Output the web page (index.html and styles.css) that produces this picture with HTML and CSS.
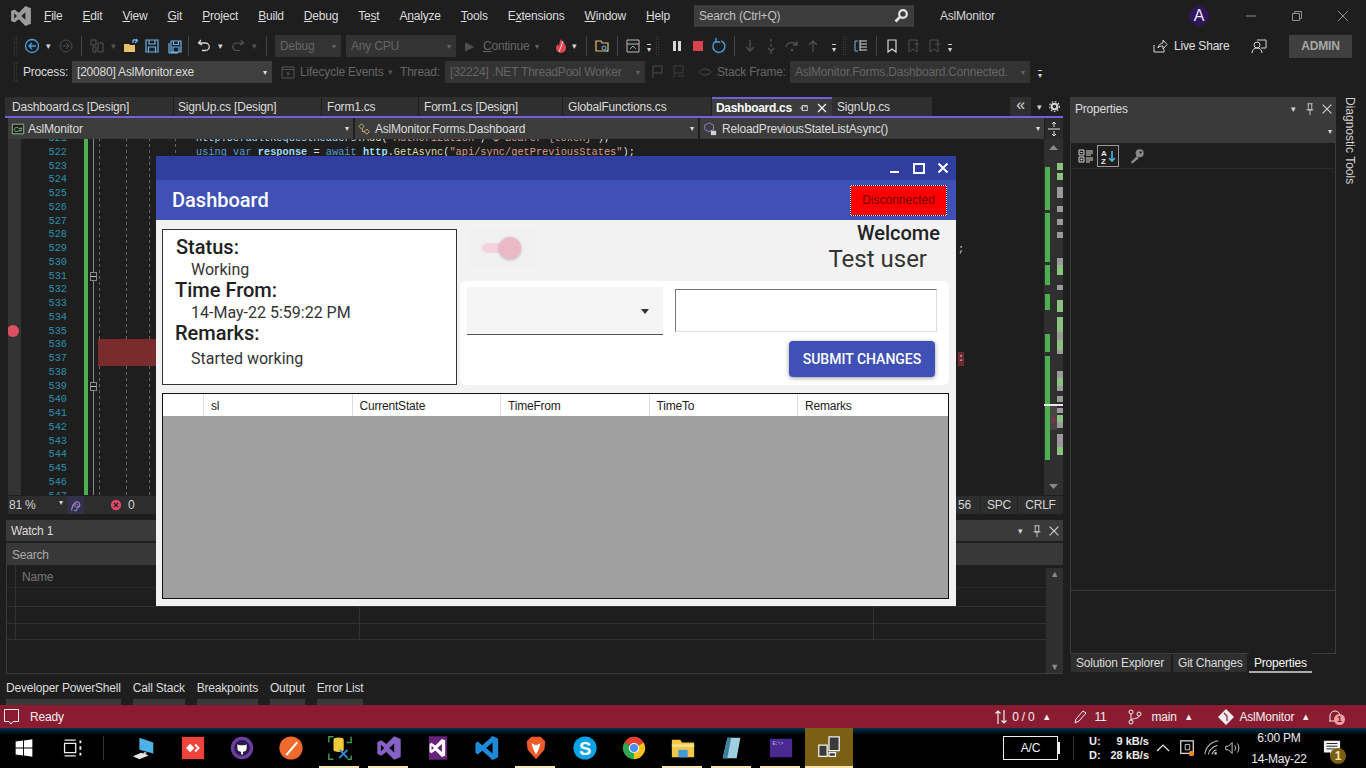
FILE: index.html
```html
<!DOCTYPE html>
<html>

<head>
  <title>AslMonitor - Visual Studio</title>
  <link rel="stylesheet" href="styles.css">
</head>

<body>
  <div class="ide">

    <header class="titlebar">
      <svg class="vs-logo" viewBox="0 0 20 20"><path fill="#9b9b9b" fill-rule="evenodd" d="M14 1 8 7 4 4 1 5.500v9L4 16l4-3 6 6 5-2V3zM3.800 7.500 6.300 10l-2.500 2.500zM14 6.500v7L10.300 10z"/></svg>
      <nav class="menu">
        <span><u>F</u>ile</span><span><u>E</u>dit</span><span><u>V</u>iew</span><span><u>G</u>it</span><span><u>P</u>roject</span><span><u>B</u>uild</span><span><u>D</u>ebug</span><span>Te<u>s</u>t</span><span>A<u>n</u>alyze</span><span><u>T</u>ools</span><span>E<u>x</u>tensions</span><span><u>W</u>indow</span><span><u>H</u>elp</span>
      </nav>
      <div class="search">
        <span>Search (Ctrl+Q)</span>
        <svg class="ic" viewBox="0 0 16 16"><circle cx="10" cy="6" r="3.800" fill="none" stroke="#e4e4e4" stroke-width="2.200"/><path d="M7 9l-4.500 4.500" stroke="#e4e4e4" stroke-width="2.600"/></svg>
      </div>
      <span class="app-title">AslMonitor</span>
      <span class="avatar">A</span>
      <div class="win-buttons">
        <svg class="ic" viewBox="0 0 16 16"><path d="M3 8h10" stroke="#8f8f8f"/></svg>
        <svg class="ic" viewBox="0 0 16 16"><path d="M3.500 5.500h7v7h-7zM5.500 5.500v-2h7v7h-2" fill="none" stroke="#8f8f8f"/></svg>
        <svg class="ic" viewBox="0 0 16 16"><path d="M3 3l10 10M13 3 3 13" stroke="#8f8f8f"/></svg>
      </div>
    </header>

    <div class="toolbar toolbar-main">
      <span class="grip"></span>
      <span class="ti"><svg class="ic" viewBox="0 0 16 16"><circle cx="8" cy="8" r="6.500" fill="none" stroke="#4a9fe0" stroke-width="1.300"/><path d="M12 8H5M8 5 5 8l3 3" fill="none" stroke="#4a9fe0" stroke-width="1.300"/></svg></span>
      <span class="tc">▾</span>
      <span class="ti"><svg class="ic" viewBox="0 0 16 16"><circle cx="8" cy="8" r="6" fill="none" stroke="#4c4c4c"/><path d="M4.500 8h7M8 5l3 3-3 3" fill="none" stroke="#4c4c4c"/></svg></span>
      <span class="ts"></span>
      <span class="ti"><svg class="ic" viewBox="0 0 16 16"><path d="M2 2h5v5H2zM9 5h5v9H9zM4 9h3v5H4z" fill="none" stroke="#565656"/></svg></span>
      <span class="tc dim">▾</span>
      <span class="ti"><svg class="ic" viewBox="0 0 16 16"><path d="M1 14V6h5l1 1h5v7z" fill="#e8c26b"/><path d="M10 5V2M10 2l4 0M13 1l1.500 1.500L12 5" fill="none" stroke="#6cb4e8" stroke-width="1.300"/></svg></span>
      <span class="ti"><svg class="ic" viewBox="0 0 16 16"><path d="M2 2h12v12H2zM5 2v4h6V2M4.500 14V9h7v5" fill="none" stroke="#6cb4e8" stroke-width="1.200"/></svg></span>
      <span class="ti save-all"><svg class="ic" viewBox="0 0 16 16"><path d="M4 3h10v11H4zM6.500 3v3.500h5V3M6 14V9h6v5M2 5v10h9" fill="none" stroke="#6cb4e8" stroke-width="1.200"/></svg></span>
      <span class="ts"></span>
      <span class="ti"><svg class="ic" viewBox="0 0 16 16"><path d="M5 2 2.500 5 6 7M3 5h6.500a3.500 3.500 0 0 1 0 7.500H6" fill="none" stroke="#d4d4d4" stroke-width="1.300"/></svg></span>
      <span class="tc">▾</span>
      <span class="ti"><svg class="ic" viewBox="0 0 16 16"><path d="M11 2l2.500 3L10 7M13 5H6.500a3.500 3.500 0 0 0 0 7.500H10" fill="none" stroke="#555" stroke-width="1.200"/></svg></span>
      <span class="tc dim">▾</span>
      <span class="ts"></span>
      <span class="combo combo-debug">Debug<i>▾</i></span>
      <span class="combo combo-cpu">Any CPU<i>▾</i></span>
      <span class="continue"><b>▶</b><span><u>C</u>ontinue</span><i>▾</i></span>
      <span class="ti"><svg class="ic" viewBox="0 0 16 16"><path d="M8 1c1 3 5 4 5 9a5 5 0 0 1-10 0c0-2 1-3 2-4 0 1 .5 2 1 2 .5-2 .5-5 2-7z" fill="#e0474c"/><path d="M10 3 6 14" stroke="#d8d8d8"/></svg></span>
      <span class="tc pull">▾</span>
      <span class="ts"></span>
      <span class="ti"><svg class="ic" viewBox="0 0 16 16"><path d="M2 3h5l1 2h6v8H2z" fill="none" stroke="#e0c070" stroke-width="1.200"/><circle cx="10" cy="10" r="2" fill="none" stroke="#6cb4e8"/><path d="M11.500 11.500 14 14" stroke="#6cb4e8"/></svg></span>
      <span class="ts"></span>
      <span class="ti"><svg class="ic" viewBox="0 0 16 16"><path d="M2 2h12v12H2zM2 6h12" fill="none" stroke="#b8b8b8"/><path d="M5 11l3-3 3 3" fill="none" stroke="#6cb4e8"/></svg></span>
      <span class="more">▾</span>
      <span class="grip"></span>
      <span class="ti pause"><svg class="ic" viewBox="0 0 16 16"><path d="M4 3h3v10H4zM9 3h3v10H9z" fill="#d8d8d8"/></svg></span>
      <span class="ti"><svg class="ic" viewBox="0 0 16 16"><path d="M3 3h10v10H3z" fill="#d9434e"/></svg></span>
      <span class="ti"><svg class="ic" viewBox="0 0 16 16"><path d="M10 2.800A6 6 0 1 1 5 3.200M5 0v4h4" fill="none" stroke="#4a9fe0" stroke-width="1.400"/></svg></span>
      <span class="ts"></span>
      <span class="ti"><svg class="ic" viewBox="0 0 16 16"><path d="M8 2v11M4 9l4 4 4-4" fill="none" stroke="#505050" stroke-width="1.300"/></svg></span>
      <span class="ti"><svg class="ic" viewBox="0 0 16 16"><path d="M8 1v3M8 6v3M5 10l3 3 3-3" fill="none" stroke="#505050" stroke-width="1.300"/><circle cx="8" cy="15" r="1" fill="#505050"/></svg></span>
      <span class="ti"><svg class="ic" viewBox="0 0 16 16"><path d="M2 9c1-5 8-6 11-2M13 3v4H9" fill="none" stroke="#505050" stroke-width="1.300"/><circle cx="8" cy="12" r="1.300" fill="#505050"/></svg></span>
      <span class="ti"><svg class="ic" viewBox="0 0 16 16"><path d="M8 14V3M4 7l4-4 4 4" fill="none" stroke="#505050" stroke-width="1.300"/></svg></span>
      <span class="more step-more">▾</span>
      <span class="grip"></span>
      <span class="ti"><svg class="ic" viewBox="0 0 16 16"><path d="M5 3H2v10h3" fill="none" stroke="#6cb4e8"/><path d="M7 3h7M7 6h7M7 9h7M7 12h7M7 2v11" stroke="#d8d8d8"/></svg></span>
      <span class="ts"></span>
      <span class="ti"><svg class="ic" viewBox="0 0 16 16"><path d="M4 2h8v12l-4-3-4 3z" fill="none" stroke="#d8d8d8" stroke-width="1.200"/></svg></span>
      <span class="ti"><svg class="ic" viewBox="0 0 16 16"><path d="M4 2h8v12l-4-3-4 3zM9 6h5" fill="none" stroke="#505050"/></svg></span>
      <span class="ti"><svg class="ic" viewBox="0 0 16 16"><path d="M4 2h8v12l-4-3-4 3zM9 6h5" fill="none" stroke="#505050"/></svg></span>
      <span class="more">▾</span>

      <div class="toolbar-right">
        <svg class="ic" viewBox="0 0 16 16"><path d="M2 7v7h10v-3M6 10c0-3 3-5 5-5V2l4 4.500L11 11V8c-2 0-4 0-5 2z" fill="none" stroke="#d4d4d4"/></svg>
        <span class="live-share">Live Share</span>
        <svg class="ic feedback" viewBox="0 0 16 16"><path d="M6 2h9v8h-5" fill="none" stroke="#d4d4d4"/><circle cx="6" cy="7" r="3" fill="none" stroke="#d4d4d4"/><path d="M1 15c0-3 2-5 5-5s5 2 5 5" fill="none" stroke="#d4d4d4"/></svg>
        <span class="admin">ADMIN</span>
      </div>
    </div>

    <div class="toolbar toolbar-debug">
      <span class="grip"></span>
      <span class="tb-label">Process:</span>
      <span class="combo combo-process">[20080] AslMonitor.exe<i>▾</i></span>
      <span class="ti lifecycle-ic"><svg class="ic" viewBox="0 0 16 16"><path d="M2 3h12v11H2zM2 5.500h12" fill="none" stroke="#555"/><path d="M9 7 6 10h2l-1 3 3-4H8z" fill="#555"/></svg></span>
      <span class="tb-dim lifecycle">Lifecycle Events</span>
      <span class="tc dim">▾</span>
      <span class="tb-dim thread">Thread:</span>
      <span class="combo combo-thread">[32224] .NET ThreadPool Worker<i>▾</i></span>
      <span class="ti flag"><svg class="ic" viewBox="0 0 16 16"><path d="M3 14V2h9v7H3" fill="none" stroke="#4c4c4c"/></svg></span>
      <span class="ti"><svg class="ic" viewBox="0 0 16 16"><path d="M3 14V2h9v7H3M7 12h7" fill="none" stroke="#3f3f3f"/></svg></span>
      <span class="ti eye"><svg class="ic" viewBox="0 0 16 16"><path d="M2 8c3-4 9-4 12 0-3 4-9 4-12 0z" fill="none" stroke="#4c4c4c"/></svg></span>
      <span class="tb-dim stack">Stack Frame:</span>
      <span class="combo combo-frame">AslMonitor.Forms.Dashboard.Connected.<i>▾</i></span>
      <span class="more frame-more">▾</span>
    </div>

    <main class="workspace">
      <section class="doc-column">
        <div class="doc-tabs">
          <span class="doc-tab tab-1">Dashboard.cs [Design]</span>
          <span class="doc-tab tab-2">SignUp.cs [Design]</span>
          <span class="doc-tab tab-3">Form1.cs</span>
          <span class="doc-tab tab-4">Form1.cs [Design]</span>
          <span class="doc-tab tab-5">GlobalFunctions.cs</span>
          <span class="doc-tab tab-active">Dashboard.cs
            <svg class="pin" viewBox="0 0 12 12"><path d="M1 6h3M4 3h6v6H4zM4 3v6M6 4.500h3" fill="none" stroke="#e8e8e8"/></svg>
            <svg class="close" viewBox="0 0 12 12"><path d="M2 2l8 8M10 2l-8 8" stroke="#f0f0f0" stroke-width="1.300"/></svg>
          </span>
          <span class="doc-tab tab-last">SignUp.cs</span>
          <div class="doc-tools">
            <span class="chev">«</span><span class="tc">▾</span>
            <svg class="ic" viewBox="0 0 16 16"><circle cx="8" cy="8" r="3.500" fill="none" stroke="#d4d4d4" stroke-width="2.500"/><circle cx="8" cy="8" r="6" fill="none" stroke="#d4d4d4" stroke-width="1.500" stroke-dasharray="2 2"/></svg>
          </div>
        </div>

        <div class="nav-bar">
          <span class="nav-seg nav-a">
            <svg class="ic" viewBox="0 0 16 16"><path d="M1.500 2.500h13v11h-13z" fill="#1e1e1e" stroke="#9bc99b"/><text x="8" y="11" font-size="8" fill="#9bc99b" text-anchor="middle" font-family="Liberation Sans">C#</text></svg>
            <span>AslMonitor</span><i>▾</i>
          </span>
          <span class="nav-seg nav-b">
            <svg class="ic" viewBox="0 0 16 16"><path d="M4 2l3 3-3 3-3-3zM10 8l3 3-3 3-3-3zM5 8v3h3" fill="none" stroke="#e0c070"/></svg>
            <span>AslMonitor.Forms.Dashboard</span><i>▾</i>
          </span>
          <span class="nav-seg nav-c">
            <svg class="ic" viewBox="0 0 16 16"><path d="M7 1l5 2.500v5L7 11 2 8.500v-5z" fill="none" stroke="#a884d8"/><path d="M9 10h6v5H9z" fill="#d4d4d4"/></svg>
            <span>ReloadPreviousStateListAsync()</span><i>▾</i>
          </span>
          <span class="nav-split"><svg class="ic" viewBox="0 0 16 16"><path d="M2 8h12M8 1v5M8 10v5M6 3l2-2 2 2M6 13l2 2 2-2" fill="none" stroke="#e0e0e0"/></svg></span>
        </div>

        <div class="editor">
          <div class="bp-margin"><span class="breakpoint"></span></div>
          <div class="line-numbers">
            <div>521</div><div>522</div><div>523</div><div>524</div><div>525</div><div>526</div><div>527</div><div>528</div><div>529</div><div>530</div><div>531</div><div>532</div><div>533</div><div>534</div><div>535</div><div>536</div><div>537</div><div>538</div><div>539</div><div>540</div><div>541</div><div>542</div><div>543</div><div>544</div><div>545</div><div>546</div><div>547</div>
          </div>
          <div class="change-bar"></div>
          <div class="code">
            <div class="code-line"><span class="c-id">http</span>.<span class="c-id">DefaultRequestHeaders</span>.<span class="c-fn">Add</span>(<span class="c-str">"Authorization"</span>, <span class="c-str">$"Bearer {token}"</span>);</div>
            <div class="code-line"><span class="c-kw">using</span> <span class="c-kw">var</span> <span class="c-id"><b>response</b></span> = <span class="c-kw">await</span> <span class="c-id"><b>http</b></span>.<span class="c-fn">GetAsync</span>(<span class="c-str">"api/sync/getPreviousStates"</span>);</div>
            <div class="error-band"></div>
            <span class="fold fold-a"></span>
            <span class="fold fold-b"></span>
            <span class="stray stray-a">;</span>
            <span class="stray stray-b">:</span>
          </div>
          <svg class="map" viewBox="0 0 19 356" width="19" height="356">
            <rect width="19" height="356" fill="#2f2f2f"/>
            <path d="M5 11h9l-4.500-5z" fill="#8a8a8a"/><path d="M5 345h9l-4.500 5z" fill="#8a8a8a"/>
            <rect x="6" y="266" width="7" height="25" fill="#454545"/>
            <rect x="8" y="278" width="3" height="6" fill="#8c2f3c"/>
            <g fill="#4caf50"><rect x="1" y="28" width="5" height="43"/><rect x="1" y="74" width="5" height="49"/><rect x="1" y="126" width="5" height="20"/><rect x="1" y="155" width="5" height="16"/><rect x="1" y="195" width="5" height="18"/><rect x="1" y="217" width="5" height="104"/></g>
            <g fill="#8bc27f"><rect x="13" y="24" width="6" height="7"/><rect x="13" y="34" width="6" height="7"/><rect x="13" y="126" width="6" height="10"/><rect x="13" y="161" width="6" height="12"/><rect x="13" y="178" width="6" height="15"/><rect x="13" y="201" width="6" height="10"/><rect x="13" y="239" width="6" height="8"/><rect x="13" y="276" width="6" height="7"/><rect x="13" y="308" width="6" height="8"/></g>
            <g fill="#9a9a9a"><rect x="13" y="48" width="6" height="11"/><rect x="13" y="67" width="6" height="6"/><rect x="13" y="80" width="6" height="6"/><rect x="13" y="93" width="6" height="6"/><rect x="13" y="119" width="6" height="7"/><rect x="13" y="146" width="6" height="5"/><rect x="13" y="193" width="6" height="8"/><rect x="13" y="211" width="6" height="4"/><rect x="13" y="232" width="6" height="7"/><rect x="13" y="247" width="6" height="5"/><rect x="13" y="257" width="6" height="6"/><rect x="13" y="269" width="6" height="5"/><rect x="13" y="283" width="6" height="6"/><rect x="13" y="295" width="6" height="13"/></g>
            <rect x="0" y="265" width="19" height="2" fill="#e8e8e8"/>
          </svg>
        </div>

        <div class="editor-status">
          <span class="zoom-level">81 %<i>▾</i></span>
          <span class="health"><svg class="ic" viewBox="0 0 16 16"><path d="M3 14c1-4 1-7 5-10 4-2 6 2 5 5-1 2-3 1-3 3s-2 3-4 2" fill="none" stroke="#a78bda" stroke-width="1.300"/><circle cx="9" cy="8" r="2" fill="none" stroke="#a78bda"/></svg></span>
          <span class="errors"><svg class="ic" viewBox="0 0 14 14"><circle cx="7" cy="7" r="6" fill="#e2486a"/><path d="M4.500 4.500l5 5M9.500 4.500l-5 5" stroke="#1e1e1e" stroke-width="1.500"/></svg>0</span>
          <span class="caret-col">56</span>
          <span class="st-cell st-spc">SPC</span>
          <span class="st-cell st-crlf">CRLF</span>
        </div>

        <div class="watch">
          <div class="panel-head">
            <span>Watch 1</span>
            <div class="panel-tools">
              <span class="tc">▾</span>
              <svg class="ic" viewBox="0 0 16 16"><path d="M5 2h6M6 2v7h4V2M4 9h8M8 9v6" fill="none" stroke="#d4d4d4"/></svg>
              <svg class="ic" viewBox="0 0 16 16"><path d="M3 3l10 10M13 3 3 13" stroke="#d4d4d4" stroke-width="1.300"/></svg>
            </div>
          </div>
          <div class="watch-search">Search</div>
          <div class="watch-body">
            <div class="watch-grid">
              <div class="watch-name">Name</div>
              <div class="watch-row watch-row-first"></div>
              <div class="watch-row"></div>
              <div class="watch-row"></div>
            </div>
            <div class="watch-scroll"><span>▲</span><span>▼</span></div>
          </div>
        </div>
      </section>

      <aside class="props">
        <div class="props-head">
          <span>Properties</span>
          <div class="panel-tools">
            <span class="tc">▾</span>
            <svg class="ic" viewBox="0 0 16 16"><path d="M5 2h6M6 2v7h4V2M4 9h8M8 9v6" fill="none" stroke="#d4d4d4"/></svg>
            <svg class="ic" viewBox="0 0 16 16"><path d="M3 3l10 10M13 3 3 13" stroke="#d4d4d4" stroke-width="1.300"/></svg>
          </div>
        </div>
        <div class="props-object"><i>▾</i></div>
        <div class="props-tools">
          <span class="pt"><svg class="ic" viewBox="0 0 16 16"><path d="M1 2h5v5H1zM1 9h5v5H1zM2.500 4.500h2M2.500 11.500h2M3.500 10.500v2" fill="none" stroke="#d4d4d4"/><path d="M8 3h7M8 5h7M8 7h5M8 10h7M8 12h7M8 14h4" stroke="#d4d4d4"/></svg></span>
          <span class="pt pt-on"><svg class="ic" viewBox="0 0 16 16"><text x="1" y="8" font-size="8" font-weight="700" fill="#e8e8e8" font-family="Liberation Sans">A</text><text x="1" y="15.500" font-size="8" font-weight="700" fill="#e8e8e8" font-family="Liberation Sans">Z</text><path d="M12 3v10M9 10l3 3 3-3" fill="none" stroke="#4ab3ea" stroke-width="1.600"/></svg></span>
          <span class="pt pt-key"><svg class="ic" viewBox="0 0 18 18"><circle cx="12" cy="6" r="4.500" fill="#8a8a8a"/><path d="M9 9 2 16v0l2 1.500 7-6z" fill="#8a8a8a"/><circle cx="13" cy="5" r="1.300" fill="#1e1e1e"/></svg></span>
        </div>
        <div class="props-grid"></div>
        <div class="props-desc"></div>
        <div class="props-tabs">
          <span class="side-tab side-solution">Solution Explorer</span>
          <span class="side-tab side-git">Git Changes</span>
          <span class="side-tab side-tab-on">Properties</span>
        </div>
      </aside>

      <div class="rail">Diagnostic Tools</div>
    </main>

    <div class="bottom-tabs">
      <span>Developer PowerShell</span><span>Call Stack</span><span>Breakpoints</span><span>Output</span><span>Error List</span>
    </div>

    <footer class="statusbar">
      <svg class="ic ready-ic" viewBox="0 0 18 18"><path d="M1.500 1.500h14v12H10l-2 2.500-2-2.500H1.500z" fill="none" stroke="#eee"/></svg>
      <span>Ready</span>
      <div class="status-right">
        <svg class="ic" viewBox="0 0 14 16"><path d="M4 15V2M1.500 4.500 4 2l2.500 2.500M10 1v13M7.500 11.500 10 14l2.500-2.500" fill="none" stroke="#eee" stroke-width="1.200"/></svg>
        <span class="s-sync">0 / 0</span><i>▴</i>
        <svg class="ic s-pencil" viewBox="0 0 16 16"><path d="M3 14l1-4 7-8 3 2-7 8z" fill="none" stroke="#eee"/></svg>
        <span>11</span>
        <svg class="ic s-branch" viewBox="0 0 16 16"><circle cx="4" cy="3" r="2" fill="none" stroke="#eee"/><circle cx="4" cy="13" r="2" fill="none" stroke="#eee"/><circle cx="12" cy="5" r="2" fill="none" stroke="#eee"/><path d="M4 5v6M12 7c0 3-6 2-8 4" fill="none" stroke="#eee"/></svg>
        <span class="s-main">main</span><i>▴</i>
        <svg class="ic s-repo" viewBox="0 0 16 16"><path d="M8 0l8 8-8 8-8-8z" fill="#eee"/><path d="M6 4l3 3v5" stroke="#8a1c32" fill="none" stroke-width="1.200"/></svg>
        <span>AslMonitor</span><i>▴</i>
        <span class="bell">
          <svg class="ic" viewBox="0 0 16 16"><path d="M3 12V7a5 5 0 0 1 10 0v5M2 12h8" fill="none" stroke="#eee"/></svg>
          <b>1</b>
        </span>
      </div>
    </footer>

    <div class="taskbar">
      <span class="tk tk-start"><svg class="tk-ic" viewBox="0 0 28 28"><path d="M5 7l8-1v7.500H5zM14 5.800 23 4.500v9h-9zM5 14.500h8V22l-8-1zM14 14.500h9v9l-9-1.300z" fill="#fff"/></svg></span>
      <span class="tk tk-view"><svg class="tk-ic" viewBox="0 0 28 28"><path d="M6 9h12v10H6zM6 5.500h12M6 22.500h12" fill="none" stroke="#eee" stroke-width="1.400"/><path d="M22 6h2v3h-2zM22 12h2v4h-2zM22 19h2v3h-2z" fill="#eee"/></svg></span>
      <span class="tk-div"></span>
      <span class="tk"><svg class="tk-ic" viewBox="0 0 28 28"><path d="M9 3l15 5v12L9 16z" fill="#4fb3ea"/><path d="M14 18l3 1-1 3-3-1z" fill="#bbb"/><path d="M2 23l9-4 8 3-10 4z" fill="#e6e6e6"/></svg></span>
      <span class="tk"><svg class="tk-ic" viewBox="0 0 28 28"><path d="M2 2h24v24H2z" fill="#ef443b"/><path d="M11 9.500l4.500 4.500-4.500 4.500L6.500 14zM17 9.500 21.500 14 17 18.500 15.500 17l3-3-3-3z" fill="#fff"/></svg></span>
      <span class="tk"><svg class="tk-ic" viewBox="0 0 28 28"><circle cx="14" cy="14" r="12" fill="#6e3fa3"/><circle cx="14" cy="14" r="8.500" fill="#2c1a4a"/><path d="M9 10l2 1h6l2-1v4c0 3-2 4-4 4v3h-2v-3c-2 0-4-1-4-4z" fill="#fff"/></svg></span>
      <span class="tk"><svg class="tk-ic" viewBox="0 0 28 28"><circle cx="14" cy="14" r="12.500" fill="#ef6a2c"/><path d="M8 21 20 7l1.500 1.500L10 22z" fill="#fff"/></svg></span>
      <span class="tk run"><svg class="tk-ic" viewBox="0 0 28 28"><path d="M7 5a5 2 0 0 1 11 0v11a5 2 0 0 1-11 0z" fill="#eec93a"/><path d="M2 8V2h5M26 2v6h-5M2 20v6h5M22 26h4v-4" fill="none" stroke="#3f9a4f" stroke-width="1.600"/><path d="M13 25l9-9M14 16l8 9" stroke="#2a8fd8" stroke-width="2"/></svg></span>
      <span class="tk run"><svg class="tk-ic" viewBox="0 0 20 20"><path fill="#8661c5" fill-rule="evenodd" d="M14 1 8 7 4 4 1 5.500v9L4 16l4-3 6 6 5-2V3zM3.800 7.500 6.300 10l-2.500 2.500zM14 6.500v7L10.300 10z"/></svg></span>
      <span class="tk"><svg class="tk-ic" viewBox="0 0 20 20"><path d="M3 1h14v18H3z" fill="#68217a"/><path fill="#fff" fill-rule="evenodd" d="M13 3 8 8 5 6 3.500 7v6L5 14l3-2 5 5 2.500-1V4zM5 8.500 7 10l-2 1.500zM13 7v6l-3.500-3z"/></svg></span>
      <span class="tk"><svg class="tk-ic" viewBox="0 0 28 28"><path fill="#1c8ad8" fill-rule="evenodd" d="M20 1l6 3v20l-6 3L9 17l-5 4-2.500-2V9L4 7l5 4zM20 8l-7 6 7 6z"/></svg></span>
      <span class="tk run"><svg class="tk-ic" viewBox="0 0 28 28"><path d="M9 2h10l5 5-1 9-9 10-9-10-1-9z" fill="#ee5a28"/><path d="M14 11l5-2-2 6-3 6-3-6-2-6z" fill="#fff"/></svg></span>
      <span class="tk"><svg class="tk-ic" viewBox="0 0 28 28"><circle cx="14" cy="14" r="12.500" fill="#08a3e6"/><text x="14" y="21" font-size="20" font-weight="700" fill="#fff" text-anchor="middle" font-family="Liberation Sans">S</text></svg></span>
      <span class="tk"><svg class="tk-ic" viewBox="0 0 28 28"><path d="M3.600 8a12 12 0 0 1 20.800 0L14 14z" fill="#e34133"/><path d="M24.400 8A12 12 0 0 1 14 26l0-12z" fill="#f8c11a"/><path d="M14 26A12 12 0 0 1 3.600 8L14 14z" fill="#2fa84f"/><circle cx="14" cy="14" r="5.500" fill="#fff"/><circle cx="14" cy="14" r="4.300" fill="#4a8cf0"/></svg></span>
      <span class="tk run"><svg class="tk-ic" viewBox="0 0 28 28"><path d="M2 5h9l2 3h13v16H2z" fill="#f2c648"/><path d="M2 10h24v3H2z" fill="#fbe08a"/><path d="M9 16h10v8H9z" fill="#3f9ad8"/></svg></span>
      <span class="tk run"><svg class="tk-ic" viewBox="0 0 28 28"><path d="M9 3h14l-4 22H4z" fill="#9fd0e0"/><path d="M9 3 4 25l5 0 4-22z" fill="#3d7f98"/></svg></span>
      <span class="tk run"><svg class="tk-ic" viewBox="0 0 28 28"><path d="M2 4h24v20H2z" fill="#4a2a90"/><text x="5" y="11" font-size="5" fill="#cfc0ee" font-family="Liberation Mono">E:\&gt;</text></svg></span>
      <span class="tk tk-active"><svg class="tk-ic" viewBox="0 0 28 28"><path d="M14 3h11v15H14zM3 12h9v12H3zM14 20h7v4h-7z" fill="#3a3a3a" stroke="#f2f2f2" stroke-width="1.400"/></svg></span>

      <div class="tray">
        <span class="battery">A/C</span>
        <span class="net-div"></span>
        <div class="netspeed">
          <b>U:</b><b class="num">9 kB/s</b>
          <b>D:</b><b class="num">28 kB/s</b>
        </div>
        <svg class="ic tray-caret" viewBox="0 0 16 16"><path d="M2 11l6-6 6 6" fill="none" stroke="#eee" stroke-width="1.200"/></svg>
        <svg class="tray-ic tray-meet" viewBox="0 0 20 20"><path d="M3 2h14v14H3z" fill="none" stroke="#ddd" stroke-width="1.400"/><path d="M8 6h5v6H8z" fill="none" stroke="#ddd"/><circle cx="15" cy="16" r="3" fill="#f08a1c"/></svg>
        <svg class="tray-ic tray-wifi" viewBox="0 0 20 20"><path d="M2 17C3 9 9 3 17 2M6 17c1-5 4-8 10-10M10 17c.5-2 2-4 5-5" fill="none" stroke="#bbb" stroke-width="1.200"/><circle cx="14" cy="16" r="1.500" fill="#bbb"/></svg>
        <svg class="tray-ic tray-sound" viewBox="0 0 20 20"><path d="M2 8h3l4-4v12l-4-4H2zM12 7c1 2 1 4 0 6M15 5c2 3 2 7 0 10" fill="none" stroke="#ddd"/></svg>
        <div class="clock"><span>6:00 PM</span><span>14-May-22</span></div>
        <span class="notify">
          <svg class="tray-ic" viewBox="0 0 20 20"><path d="M1 2h18v13h-8l-3 4v-4H1z" fill="#f2f2f2"/><path d="M4 5h12M4 8h12M4 11h9" stroke="#111"/></svg>
          <b>1</b>
        </span>
      </div>
    </div>

    <div class="app-window">
      <div class="window-bar">
        <svg class="ic" viewBox="0 0 16 16"><path d="M3 12h9" stroke="#fff" stroke-width="2"/></svg>
        <svg class="ic" viewBox="0 0 16 16"><path d="M3 4h10v9H3z" fill="none" stroke="#fff" stroke-width="2"/></svg>
        <svg class="ic" viewBox="0 0 16 16"><path d="M3.500 3.500l9 9M12.500 3.500l-9 9" stroke="#fff" stroke-width="2"/></svg>
      </div>
      <div class="app-header">
        <span class="app-name">Dashboard</span>
        <button class="conn-button">Disconnected</button>
      </div>
      <div class="app-body">
        <div class="status-card">
          <div class="st-head">Status:</div>
          <div class="st-val">Working</div>
          <div class="st-head st-head-out">Time From:</div>
          <div class="st-val">14-May-22 5:59:22 PM</div>
          <div class="st-head st-head-out">Remarks:</div>
          <div class="st-val st-last">Started working</div>
        </div>
        <div class="app-right">
          <div class="user-row">
            <div class="toggle-box"><span class="toggle-track"></span><span class="toggle-thumb"></span></div>
            <div class="user-text">
              <div class="welcome">Welcome</div>
              <div class="user-name">Test user</div>
            </div>
          </div>
          <div class="change-panel">
            <div class="change-fields">
              <div class="select-box"><i></i></div>
              <div class="text-box"></div>
            </div>
            <button class="submit">SUBMIT CHANGES</button>
          </div>
        </div>
      </div>
      <div class="data-grid">
        <div class="grid-head">
          <span class="col-row"></span><span>sl</span><span>CurrentState</span><span>TimeFrom</span><span>TimeTo</span><span>Remarks</span>
        </div>
      </div>
    </div>

  </div>
</body>

</html>
```

FILE: styles.css
```css
* {
  box-sizing: border-box;
}

html,
body {
  margin: 0;
  height: 100%;
}

body {
  background: #1e1e1e;
  color: #d4d4d4;
  font-family: "Liberation Sans", Arial, sans-serif;
  font-size: 12px;
  letter-spacing: -0.200px;
  overflow: hidden;
}

i {
  font-style: normal;
}

.ide {
  position: relative;
  width: 1366px;
  height: 768px;
  display: flex;
  flex-direction: column;
}

.ic {
  width: 16px;
  height: 16px;
  flex: none;
  display: block;
}

/* title bar */

.titlebar {
  height: 32px;
  display: flex;
  align-items: center;
  flex: none;
}

.vs-logo {
  width: 22px;
  height: 22px;
  margin-left: 10px;
  margin-right: 12px;
}

.menu {
  width: 650px;
  display: flex;
  gap: 20px;
  color: #dcdcdc;
}

.search {
  width: 220px;
  height: 22px;
  background: #3c3c3c;
  display: flex;
  align-items: center;
  justify-content: space-between;
  padding: 0 5px 0 5px;
  color: #c0c0c0;
}

.app-title {
  width: 58px;
  margin-left: 26px;
  flex: none;
  color: #d8d8d8;
}

.avatar {
  width: 20px;
  height: 20px;
  margin-left: 191px;
  border-radius: 50%;
  background: #2e1658;
  color: #ece4ff;
  font-size: 16px;
  line-height: 20px;
  text-align: center;
}

.win-buttons {
  display: flex;
  gap: 30px;
  margin-left: 34px;
}

/* tool bars */

.toolbar {
  display: flex;
  align-items: center;
  flex: none;
  padding-left: 13px;
  white-space: nowrap;
}

.toolbar-main {
  height: 28px;
}

.toolbar-debug {
  height: 24px;
}

.grip {
  width: 5px;
  height: 20px;
  flex: none;
  margin-right: 3px;
  background-image: radial-gradient(#5a5a5a 30%, transparent 35%);
  background-size: 2.500px 2.500px;
}

.ti {
  width: 21px;
  flex: none;
  display: flex;
  justify-content: center;
}

.save-all {
  transform: translateX(2px);
}

.tc {
  width: 13px;
  flex: none;
  text-align: center;
  font-size: 9px;
  color: #d4d4d4;
}

.tc.dim {
  color: #555;
}

.tc.pull {
  margin-left: -3px;
}

.ts {
  width: 10px;
  height: 20px;
  flex: none;
  background: linear-gradient(#444, #444) center / 1px 100% no-repeat;
}

.more {
  width: 12px;
  flex: none;
  font-size: 8px;
  padding-top: 6px;
  text-align: center;
  text-decoration: overline;
  color: #d4d4d4;
}

.step-more {
  margin-left: 5px;
  margin-right: 2px;
}

.combo {
  height: 22px;
  flex: none;
  display: flex;
  align-items: center;
  justify-content: space-between;
  padding: 0 5px;
  background: #333;
  color: #666;
}

.combo i {
  font-size: 8px;
}

.combo-debug {
  width: 66px;
  margin-left: 4px;
}

.combo-cpu {
  width: 110px;
  margin-left: 5px;
}

.continue {
  width: 85px;
  margin-left: 9px;
  display: flex;
  align-items: center;
  flex: none;
  color: #666;
}

.continue b {
  width: 18px;
  color: #4f4f4f;
  font-weight: 400;
  font-size: 12px;
}

.continue i {
  margin-left: 6px;
  font-size: 8px;
}

.pause {
  margin-left: 3px;
}

.toolbar-right {
  margin-left: auto;
  display: flex;
  align-items: center;
  padding-right: 14px;
}

.live-share {
  width: 53px;
  margin-left: 6px;
  color: #e0e0e0;
}

.feedback {
  margin-left: 24px;
}

.admin {
  width: 63px;
  height: 23px;
  margin-left: 22px;
  background: #3f3f3f;
  color: #a8a8a8;
  font-weight: 700;
  line-height: 23px;
  text-align: center;
}

.tb-label {
  width: 49px;
  flex: none;
  margin-left: 2px;
  color: #dcdcdc;
}

.tb-dim {
  color: #666;
  flex: none;
}

.combo-process {
  width: 200px;
  background: #3f3f3f;
  color: #dcdcdc;
}

.combo-thread {
  width: 200px;
  margin-left: 3px;
}

.lifecycle-ic {
  margin-left: 5px;
}

.lifecycle {
  width: 84px;
  margin-left: 2px;
}

.thread {
  width: 42px;
  margin-left: 3px;
}

.flag {
  margin-left: 2px;
}

.eye {
  margin-left: 5px;
}

.stack {
  margin-left: 2px;
  width: 73px;
}

.combo-frame {
  width: 240px;
}

.frame-more {
  margin-left: 4px;
}

/* main area */

.workspace {
  height: 594px;
  flex: none;
  display: flex;
  padding-top: 13px;
}

.doc-column {
  width: 1058px;
  margin-left: 5px;
  flex: none;
  display: flex;
  flex-direction: column;
}

.doc-tabs {
  height: 21px;
  display: flex;
  align-items: stretch;
  border-bottom: 2px solid #7160d8;
  width: 1058px;
  flex: none;
}

.doc-tab {
  background: #2f2f2f;
  padding-left: 5px;
  line-height: 20px;
  margin-right: 1px;
  color: #dcdcdc;
  flex: none;
  white-space: nowrap;
}

.tab-1 { width: 168px; padding-left: 7px; }
.tab-2 { width: 147px; padding-left: 4px; }
.tab-3 { width: 96px; }
.tab-4 { width: 143px; }
.tab-5 { width: 148px; }

.tab-active {
  width: 120px;
  height: 19px;
  margin-right: 0;
  padding-left: 4px;
  position: relative;
  background: #3b3b3b;
  border-top: 2px solid #7160d8;
  color: #fff;
  font-weight: 700;
  line-height: 18px;
  letter-spacing: -0.300px;
}

.tab-active .pin {
  position: absolute;
  left: 87px;
  top: 4px;
  width: 10px;
  height: 10px;
}

.tab-active .close {
  position: absolute;
  left: 104px;
  top: 3px;
  width: 12px;
  height: 12px;
}

.tab-last {
  width: 100px;
  margin-right: 0;
}

.doc-tools {
  margin-left: 78px;
  display: flex;
  align-items: center;
  gap: 0;
  height: 19px;
}

.chev {
  width: 21px;
  height: 19px;
  background: #2f2f2f;
  font-size: 16px;
  line-height: 16px;
  text-align: center;
}

.doc-tools .tc {
  width: 16px;
}

.doc-tools .ic {
  width: 13px;
  height: 13px;
  margin-left: 1px;
}

.nav-bar {
  height: 21px;
  margin-left: 3px;
  display: flex;
  gap: 2px;
  flex: none;
}

.nav-seg {
  display: flex;
  align-items: center;
  background: #3c3c3c;
  color: #dcdcdc;
  padding-left: 3px;
  position: relative;
}

.nav-seg .ic {
  width: 14px;
  height: 14px;
  margin-right: 3px;
}

.nav-seg i {
  margin-left: auto;
  padding-right: 4px;
  font-size: 8px;
}

.nav-a { width: 345px; }
.nav-b { width: 343px; }
.nav-c { width: 344px; }
.nav-c .ic { margin-right: 5px; }

.nav-split {
  width: 18px;
  margin-left: -1px;
  background: #2a2a2a;
  display: flex;
  align-items: center;
  justify-content: center;
}

.editor {
  height: 356px;
  flex: none;
  margin-left: 3px;
  display: flex;
  overflow: hidden;
}

.bp-margin {
  width: 13px;
  flex: none;
  background: #333;
  position: relative;
}

.breakpoint {
  position: absolute;
  left: -1px;
  top: 186px;
  width: 12px;
  height: 12px;
  border-radius: 50%;
  background: #df4f63;
}

.line-numbers {
  width: 46px;
  flex: none;
  margin-top: -7px;
  text-align: right;
  font-family: "Liberation Mono", monospace;
  font-size: 10.300px;
  line-height: 13.750px;
  letter-spacing: 0;
  color: #2b91af;
}

.change-bar {
  width: 4px;
  margin-left: 17px;
  flex: none;
  background: #4caf50;
}

.code {
  width: 956px;
  flex: none;
  position: relative;
  padding-left: 108px;
  margin-top: -7px;
  font-family: "Liberation Mono", monospace;
  font-size: 10.300px;
  line-height: 13.750px;
  letter-spacing: 0;
  color: #dcdcdc;
  white-space: nowrap;
  background-image:
    linear-gradient(#888, #888),
    repeating-linear-gradient(#666 0 3px, transparent 3px 6px),
    repeating-linear-gradient(#666 0 3px, transparent 3px 6px),
    repeating-linear-gradient(#666 0 3px, transparent 3px 6px),
    repeating-linear-gradient(#666 0 3px, transparent 3px 6px);
  background-size: 1px 100%;
  background-repeat: no-repeat;
  background-position: 5px 0, 11px 0, 38px 0, 61px 0, 87px 0;
}

.c-kw { color: #569cd6; }
.c-id { color: #9cdcfe; }
.c-fn { color: #dcdcaa; }
.c-str { color: #d69d85; }

.code-line b {
  font-weight: 700;
}

.error-band {
  position: absolute;
  left: 10px;
  top: 207px;
  width: 100px;
  height: 27px;
  background: #7a2b2b;
}

.fold {
  position: absolute;
  left: 2px;
  width: 7px;
  height: 9px;
  border: 1px solid #888;
  background: linear-gradient(#bbb, #bbb) center / 5px 1px no-repeat #1e1e1e;
}

.fold-a { top: 140px; }
.fold-b { top: 250px; }

.stray {
  position: absolute;
  left: 870px;
  color: #c8c8c8;
}

.stray-a { top: 111px; }
.stray-b { top: 220px; background: #6e2a2a; }

.map {
  flex: none;
  display: block;
}

.editor-status {
  height: 18px;
  margin-top: 1px;
  margin-left: 3px;
  display: flex;
  align-items: center;
  background: #2d2d2d;
  color: #d4d4d4;
  flex: none;
  width: 1055px;
}

.zoom-level {
  width: 59px;
  flex: none;
  display: flex;
  justify-content: space-between;
  padding: 0 4px 0 1px;
}

.zoom-level i {
  font-size: 8px;
}

.health {
  width: 17px;
  height: 18px;
  flex: none;
  background: #33304a;
  display: flex;
  align-items: center;
  justify-content: center;
}

.health .ic {
  width: 13px;
  height: 13px;
}

.errors {
  margin-left: 26px;
  display: flex;
  align-items: center;
  gap: 6px;
}

.errors .ic {
  width: 12px;
  height: 12px;
}

.caret-col {
  margin-left: auto;
  width: 22px;
  flex: none;
}

.st-cell {
  height: 18px;
  flex: none;
  line-height: 18px;
  text-align: center;
  border-left: 1px solid #222;
}

.st-spc { width: 37px; }
.st-crlf { width: 46px; }

.watch {
  width: 1058px;
  margin-top: 6px;
  flex: none;
}

.panel-head {
  height: 21px;
  margin-left: 1px;
  padding-left: 5px;
  background: #3a3a3a;
  display: flex;
  align-items: center;
  justify-content: space-between;
  color: #dcdcdc;
}

.panel-tools {
  display: flex;
  align-items: center;
  gap: 3px;
  padding-right: 2px;
}

.panel-tools .ic {
  width: 14px;
  height: 14px;
}

.watch-search {
  height: 22px;
  margin-top: 2px;
  margin-left: 1px;
  padding-left: 6px;
  background: #383838;
  color: #aaa;
  line-height: 25px;
}

.watch-body {
  height: 109px;
  margin-left: 1px;
  display: flex;
  border-bottom: 1px solid #3c3c3c;
  border-left: 1px solid #3c3c3c;
}

.watch-grid {
  flex: 1;
  background:
    linear-gradient(#333, #333) 8px 0 / 1px 75px no-repeat,
    linear-gradient(#333, #333) 352px 41px / 1px 34px no-repeat,
    linear-gradient(#333, #333) 866px 41px / 1px 34px no-repeat;
}

.watch-name {
  height: 23px;
  padding-left: 15px;
  color: #777;
  line-height: 25px;
  border-bottom: 1px solid #2a2a2a;
}

.watch-row {
  height: 16.500px;
  border-bottom: 1px solid #333;
}

.watch-row-first {
  height: 19px;
}

.watch-scroll {
  width: 17px;
  margin-top: 3px;
  background: #2f2f2f;
  display: flex;
  flex-direction: column;
  justify-content: space-between;
  align-items: center;
  padding: 1px 0;
  font-size: 9px;
  color: #8a8a8a;
}

.props {
  width: 266px;
  margin-left: 7px;
  flex: none;
  display: flex;
  flex-direction: column;
}

.props-head {
  height: 23px;
  padding-left: 5px;
  background: #3a3a3a;
  display: flex;
  align-items: center;
  justify-content: space-between;
  color: #dcdcdc;
}

.props-object {
  height: 23px;
  background: #3a3a3a;
  text-align: right;
  padding-right: 4px;
  font-size: 8px;
  line-height: 24px;
}

.props-tools {
  height: 26px;
  padding-left: 4px;
  display: flex;
  align-items: center;
  gap: 0;
  border-bottom: 1px solid #2c2c2c;
  border-left: 1px solid #3c3c3c;
  border-right: 1px solid #3c3c3c;
}

.pt {
  width: 22px;
  height: 22px;
  display: flex;
  align-items: center;
  justify-content: center;
}

.pt-on {
  border: 1px solid #9a9a9a;
}

.pt-key {
  margin-left: 7px;
}

.props-grid {
  height: 421px;
  border-left: 1px solid #3c3c3c;
  border-right: 1px solid #3c3c3c;
}

.props-desc {
  height: 63px;
  border: 1px solid #3c3c3c;
  border-bottom: 0;
}

.props-tabs {
  display: flex;
  gap: 2px;
  height: 19px;
  padding-left: 1px;
  border-top: 1px solid #3c3c3c;
}

.side-tab {
  background: #2f2f2f;
  padding-left: 5px;
  line-height: 18px;
  color: #dcdcdc;
}

.side-solution { width: 100px; }
.side-git { width: 74px; }

.side-tab-on {
  width: 63px;
  height: 20px;
  margin-top: -1px;
  background: #1e1e1e;
  color: #f4f4f4;
  border-bottom: 2px solid #aaa;
  line-height: 20px;
}

.rail {
  margin-left: 7px;
  writing-mode: vertical-rl;
  letter-spacing: 0;
  color: #d0d0d0;
}

/* bottom */

.bottom-tabs {
  height: 27px;
  flex: none;
  display: flex;
  gap: 12px;
  padding-left: 6px;
}

.bottom-tabs span {
  border-bottom: 6px solid #3a3a3a;
  line-height: 20px;
  color: #dcdcdc;
}

.statusbar {
  height: 23px;
  flex: none;
  background: #8a1c32;
  color: #f0f0f0;
  display: flex;
  align-items: center;
}

.ready-ic {
  width: 18px;
  height: 18px;
  margin: 0 9px 0 3px;
}

.status-right {
  margin-left: auto;
  display: flex;
  align-items: center;
  gap: 6px;
  padding-right: 23px;
}

.status-right i {
  font-size: 11px;
  margin-left: 3px;
}

.s-sync { margin-left: -3px; }
.s-pencil { margin-left: 17px; }
.s-branch { margin-left: 15px; }
.s-main { margin-left: 2px; }
.s-repo { margin-left: 20px; }

.bell {
  position: relative;
  margin-left: 12px;
}

.bell b {
  position: absolute;
  left: 7px;
  top: 5px;
  width: 11px;
  height: 11px;
  border-radius: 50%;
  background: #f0a0a0;
  color: #7a1c2c;
  font-size: 9px;
  line-height: 11px;
  text-align: center;
}

.taskbar {
  height: 40px;
  flex: none;
  display: flex;
  background: linear-gradient(#05324c, #000 7px);
  color: #eee;
}

.tk {
  width: 49px;
  flex: none;
  position: relative;
  display: flex;
  align-items: center;
  justify-content: center;
}

.tk-ic {
  width: 26px;
  height: 26px;
}

.tk-start,
.tk-view {
  width: 48px;
}

.tk-div {
  width: 23px;
  flex: none;
  background: linear-gradient(#333, #333) 7px center / 1px 24px no-repeat;
}

.run::after {
  content: "";
  position: absolute;
  left: 4px;
  right: 5px;
  bottom: 0;
  height: 2px;
  background: #f5e4b0;
}

.tk-active {
  width: 48px;
  background: #7a5f14;
  border-bottom: 2px solid #f5e4b0;
}

.tray {
  margin-left: 150px;
  display: flex;
  align-items: center;
}

.battery {
  width: 55px;
  height: 24px;
  position: relative;
  border: 1px solid #eee;
  line-height: 22px;
  text-align: center;
  color: #f2f2f2;
}

.battery::after {
  content: "";
  position: absolute;
  right: -3px;
  top: 5px;
  width: 2px;
  height: 12px;
  background: #eee;
}

.net-div {
  width: 1px;
  height: 24px;
  margin-left: 15px;
  background: #333;
}

.netspeed {
  width: 60px;
  margin-left: 15px;
  display: grid;
  grid-template-columns: 1fr auto;
  font-size: 11px;
  line-height: 14px;
  letter-spacing: 0;
}

.netspeed .num {
  text-align: right;
}

.tray-caret {
  margin-left: 6px;
}

.tray-ic {
  width: 18px;
  height: 18px;
  flex: none;
  display: block;
}

.tray-meet { margin-left: 7px; }
.tray-wifi { margin-left: 7px; }
.tray-sound { margin-left: 3px; }

.clock {
  width: 60px;
  margin-left: 7px;
  display: flex;
  flex-direction: column;
  align-items: center;
  gap: 7px;
  color: #eee;
  line-height: 14px;
}

.notify {
  position: relative;
  margin-left: 14px;
}

.notify b {
  position: absolute;
  left: 7px;
  top: 9px;
  width: 16px;
  height: 16px;
  border-radius: 50%;
  background: #7a5f14;
  color: #f5e4b0;
  font-size: 12px;
  line-height: 16px;
  text-align: center;
}

/* the running application window */

.app-window {
  position: absolute;
  left: 156px;
  top: 156px;
  width: 800px;
  height: 450px;
  background: #f2f2f2;
  color: #212121;
  font-family: Roboto, sans-serif;
  letter-spacing: 0;
}

.window-bar {
  height: 24px;
  background: #303f9f;
  display: flex;
  justify-content: flex-end;
  align-items: center;
  gap: 8px;
  padding-right: 5px;
}

.app-header {
  height: 40px;
  background: #3f51b5;
  display: flex;
  align-items: center;
  justify-content: space-between;
  padding: 0 9px 0 16px;
}

.app-name {
  color: #fff;
  font-size: 20px;
  font-weight: 500;
}

.conn-button {
  width: 97px;
  height: 31px;
  padding: 0;
  border: 1px solid #fff;
  outline: 1px dotted #0b0b3a;
  outline-offset: -1px;
  background: #f00;
  color: #6e0000;
  font-family: "Liberation Sans", Arial, sans-serif;
  font-size: 12px;
}

.app-body {
  display: flex;
  gap: 3px;
  padding: 0 7px 0 6px;
}

.status-card {
  width: 295px;
  height: 156px;
  flex: none;
  margin-top: 9px;
  padding: 7px 0 0 13px;
  background: #fff;
  border: 1px solid #333;
  font-size: 16px;
  line-height: 21.500px;
}

.st-head {
  font-size: 20px;
  font-weight: 500;
}

.st-head-out {
  margin-left: -1px;
}

.st-val {
  padding-left: 15px;
  color: #333;
}

.st-last {
  margin-top: 3px;
}

.app-right {
  flex: 1;
  min-width: 0;
}

.user-row {
  height: 61px;
  position: relative;
  display: flex;
  justify-content: space-between;
}

.toggle-box {
  width: 67px;
  height: 36px;
  margin: 10px 0 0 10px;
  background: #f0f0f0;
  position: relative;
}

.toggle-track {
  position: absolute;
  left: 12px;
  top: 13px;
  width: 28px;
  height: 10px;
  border-radius: 5px;
  background: #f5d3dc;
}

.toggle-thumb {
  position: absolute;
  left: 29px;
  top: 7px;
  width: 22px;
  height: 22px;
  border-radius: 50%;
  background: #ecb8c8;
  box-shadow: 0 1px 3px rgba(0, 0, 0, 0.25);
}

.user-text {
  padding-right: 9px;
  text-align: right;
}

.welcome {
  font-size: 20px;
  font-weight: 500;
  line-height: 27px;
}

.user-name {
  padding-right: 13px;
  font-size: 24px;
  line-height: 25px;
  color: #333;
}

.change-panel {
  height: 104px;
  padding: 6px 14px 0 7px;
  background: #fff;
  border-radius: 6px;
  display: flex;
  flex-direction: column;
  align-items: flex-end;
}

.change-fields {
  align-self: stretch;
  display: flex;
  gap: 12px;
}

.select-box {
  width: 196px;
  height: 48px;
  flex: none;
  background: #f5f5f5;
  border-bottom: 1px solid #555;
  position: relative;
}

.select-box i {
  position: absolute;
  left: 174px;
  top: 22px;
  border-left: 4px solid transparent;
  border-right: 4px solid transparent;
  border-top: 5px solid #333;
}

.text-box {
  width: 262px;
  height: 43px;
  flex: none;
  margin-top: 2px;
  background: #fff;
  border: 1px solid #ddd;
  border-top: 1px solid #777;
  border-left: 1px solid #777;
}

.submit {
  width: 146px;
  height: 36px;
  margin-top: 6px;
  border: 0;
  border-radius: 4px;
  background: #3f51b5;
  color: #fff;
  font-family: Roboto, sans-serif;
  font-size: 14px;
  font-weight: 500;
  box-shadow: 0 1px 4px rgba(0, 0, 0, 0.4);
}

.data-grid {
  width: 787px;
  height: 206px;
  margin: 8px 0 0 6px;
  background: #a0a0a0;
  border: 1px solid #111;
}

.grid-head {
  height: 22px;
  background: #fff;
  display: flex;
  font-family: "Liberation Sans", Arial, sans-serif;
  font-size: 12px;
  letter-spacing: -0.200px;
  color: #222;
}

.grid-head span {
  width: 148.500px;
  padding-left: 7px;
  border-right: 1px solid #ddd;
  line-height: 24px;
}

.grid-head .col-row {
  width: 41px;
}

.grid-head span:last-child {
  border-right: 0;
}
```
